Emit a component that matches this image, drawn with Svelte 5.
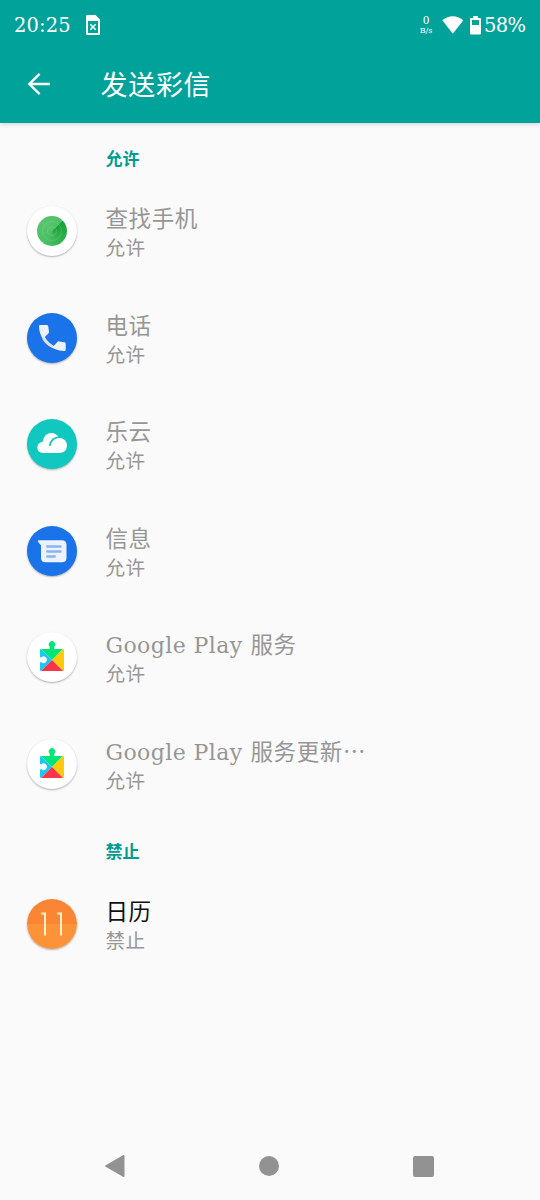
<script>
  const groups = [
    {
      title: '允许',
      apps: [
        { icon: 'radar', name: [['查找手机', 'zh']], state: '允许' },
        { icon: 'phone', name: [['电话', 'zh']], state: '允许' },
        { icon: 'cloud', name: [['乐云', 'zh']], state: '允许' },
        { icon: 'messages', name: [['信息', 'zh']], state: '允许' },
        { icon: 'play', name: [['Google Play', 'en'], ['服务', 'zh']], state: '允许' },
        { icon: 'play', name: [['Google Play', 'en'], ['服务更新…', 'zh']], state: '允许' }
      ]
    },
    {
      title: '禁止',
      apps: [{ icon: 'calendar', name: [['日历', 'zh']], state: '禁止', active: true }]
    }
  ];
</script>

<div class="screen" lang="zh-CN">
  <header>
    <div class="status">
      <span class="time">20:25</span>
      <svg class="sim" width="14" height="20" viewBox="0 0 14 20">
        <path fill="#fff" fill-rule="evenodd" d="M1.2 0H9.5L14 4.5V18.8Q14 20 12.8 20H1.2Q0 20 0 18.8V1.2Q0 0 1.2 0ZM2 6V18H12V6Z" />
        <path stroke="#fff" stroke-width="1.5" d="M4.3 9.2L9.7 14.8M9.7 9.2L4.3 14.8" />
      </svg>
      <span class="gap"></span>
      <span class="speed"><span>0</span><small>B/s</small></span>
      <svg class="wifi" width="22" height="18" viewBox="0 0 22 18">
        <path fill="#fff" d="M0.3 4.2Q10.8 -3.6 21.4 4.2L10.8 17.7Z" />
      </svg>
      <svg class="battery" width="11" height="19" viewBox="0 0 11 19">
        <path fill="#fff" fill-rule="evenodd" d="M3 0H8V2H10Q11 2 11 3V17.5Q11 18.5 10 18.5H1Q0 18.5 0 17.5V3Q0 2 1 2H3ZM2 4V9H9V4Z" />
      </svg>
      <span class="percent">58%</span>
    </div>
    <div class="toolbar">
      <svg width="24" height="24" viewBox="0 0 24 24" fill="none" stroke="#fff" stroke-width="2.4">
        <path d="M23 12H2.5M12.6 1.8L2.4 12L12.6 22.2" />
      </svg>
      <h1>发送彩信</h1>
    </div>
  </header>

  <main>
    {#each groups as group}
      <section>
        <h2>{group.title}</h2>
        {#each group.apps as app}
          <div class="row">
            <div class="icon {app.icon}">
              {#if app.icon === 'radar'}
                <div class="sweep">
                  <svg viewBox="0 0 30 30">
                    <g fill="none" stroke="#a5e8b0" stroke-width=".6" opacity=".4">
                      <circle cx="15" cy="15" r="4.5" /><circle cx="15" cy="15" r="9.5" />
                    </g>
                  </svg>
                </div>
              {:else if app.icon === 'phone'}
                <svg viewBox="0 0 50 50">
                  <path fill="#edf1fa" d="M13 12H19.7Q21 12 21.2 13.3L22 18.5Q22.2 19.7 21.4 20.5L17.7 24Q21 29.8 26.7 33L30.3 29.1Q31.1 28.2 32.3 28.4L37.6 29.3Q38.7 29.5 38.7 30.7V36.7Q38.7 38 37.4 38C24 38 12 26.5 12 13Q12 12 13 12Z" />
                  <path fill="#dcdfe6" d="M17.7 24Q21 29.8 26.7 33L24.4 34.5Q18 31.3 15.2 25.8Z" />
                </svg>
              {:else if app.icon === 'cloud'}
                <svg viewBox="0 0 50 50">
                  <path fill="#fff" d="M16.5 34Q10.3 33.7 10.3 28.5Q10.5 23.7 15.5 23Q17.2 14 24.5 14Q29 14 31.8 18.5Q40 20 40 26.8Q39.5 33.5 33 34Z" />
                  <path fill="none" stroke="#10c8bf" stroke-width="1.8" d="M22.8 26.8Q23.7 18.5 33.5 17.8" />
                </svg>
              {:else if app.icon === 'messages'}
                <svg viewBox="0 0 50 50">
                  <path fill="#edf3fd" d="M11.8 14.3H35Q39.5 14.3 39.5 18.8V31.7Q39.5 36.2 35 36.2H18.5Q14 36.2 14 31.7V19.5L11 15.8Q10.3 14.3 11.8 14.3Z" />
                  <path stroke="#8ab2f5" stroke-width="2.6" stroke-linecap="round" d="M20.3 20.5H33.4M20.3 25.5H33.4M20.3 30.5H27.7" />
                </svg>
              {:else if app.icon === 'play'}
                <svg viewBox="0 0 50 50">
                  <path fill="#00e676" d="M14 17H22.7V14.7A3.2 3.2 0 1 1 27.3 14.7V17H36L25 28Z" />
                  <path fill="#18c9f4" d="M14 17Q13 17 13 18V25.2H14.4A3.3 3.3 0 1 1 14.4 30.2H13V38Q13 39 14 39L25 28Z" />
                  <path fill="#ffca08" d="M36 17Q37 17 37 18V38Q37 39 36 39L25 28Z" />
                  <path fill="#fa3549" d="M14 39H36L25 28Z" />
                </svg>
              {:else}
                <svg viewBox="0 0 50 50">
                  <path fill="none" stroke="#fff0c8" stroke-width="2" d="M14 14.5H18V36.5M30 14.5H34V36.5" />
                </svg>
              {/if}
            </div>
            <div class="text">
              <div class="name" class:active={app.active}>
                {#each app.name as [part, kind]}<span class={kind}>{part}</span>{/each}
              </div>
              <div class="state">{app.state}</div>
            </div>
          </div>
        {/each}
      </section>
    {/each}
  </main>

  <nav>
    <svg width="20" height="24" viewBox="0 0 20 24"><path fill="#929292" stroke="#929292" stroke-width="2" stroke-linejoin="round" d="M1.2 12L18.5 2V22Z" /></svg>
    <svg width="20" height="20" viewBox="0 0 20 20"><circle cx="10" cy="10" r="10" fill="#929292" /></svg>
    <svg width="21" height="21" viewBox="0 0 21 21"><rect width="21" height="21" rx="2" fill="#929292" /></svg>
  </nav>
</div>

<style>
  :global(body) { margin: 0; background: #fafafa; }
  .screen {
    width: 540px;
    height: 1200px;
    display: flex;
    flex-direction: column;
    background: #fafafa;
    font-family: "DejaVu Serif", "Noto Sans CJK SC", serif;
    overflow: hidden;
  }
  svg { display: block; flex: none; }
  header {
    height: 123px;
    flex: none;
    background: #00a29a;
    color: #fff;
    box-shadow: 0 1px 5px rgba(0, 0, 0, .18);
  }
  .status {
    height: 50px;
    display: flex;
    align-items: center;
    padding: 0 14px;
    box-sizing: border-box;
  }
  .time { width: 58px; font-size: 19.5px; white-space: nowrap; letter-spacing: .1px; }
  .sim { margin-left: 14px; }
  .gap { flex: 1; }
  .speed {
    width: 14px;
    margin-right: 9px;
    display: flex;
    flex-direction: column;
    align-items: center;
    font-size: 10.5px;
    line-height: 11px;
  }
  .speed small { font-size: 8px; line-height: 9px; }
  .wifi { margin-right: 6px; }
  .battery { margin-right: 3px; }
  .percent { width: 42px; font-size: 19.5px; letter-spacing: -.6px; white-space: nowrap; }
  .toolbar { height: 68px; display: flex; align-items: center; padding-left: 27px; gap: 49.5px; }
  h1 { margin: 0; font-family: "Noto Sans CJK SC", sans-serif; font-size: 27px; line-height: 40px; font-weight: 400; letter-spacing: .7px; }
  main { flex: 1; }
  h2 {
    height: 54.5px;
    box-sizing: border-box;
    margin: 0;
    padding: 23px 0 0 105.5px;
    color: #009c94;
    font-family: "Noto Sans CJK SC", sans-serif;
    font-size: 17px;
    line-height: 24px;
    font-weight: 700;
  }
  section + section h2 { height: 53.5px; padding-top: 22px; }
  .row { height: 106.5px; display: flex; align-items: flex-start; padding-left: 27px; box-sizing: border-box; }
  .icon {
    width: 50px;
    height: 50px;
    margin: 28.5px 28.5px 0 0;
    border-radius: 50%;
    background: #fff;
    box-shadow: 0 1px 2px rgba(0, 0, 0, .3);
  }
  .radar { display: grid; place-items: center; }
  .sweep {
    width: 30px;
    height: 30px;
    border-radius: 50%;
    background: conic-gradient(from 46deg, #16a238, #2fb04e 22%, #4abf64 45%, #58c570 75%, #4cc066);
  }
  .phone, .messages { background: #1a73e8; }
  .cloud { background: #10c8bf; }
  .calendar { background: linear-gradient(#fa8535 50%, #fc9339 50%); }
  .text { padding-top: 24.5px; }
  .name { height: 31px; display: flex; align-items: baseline; gap: 8px; color: #969696; line-height: 30px; white-space: nowrap; }
  .name.active { color: #111; }
  .zh { font-size: 22.5px; letter-spacing: .6px; font-family: "Noto Sans CJK SC", sans-serif; }
  .en { font-size: 22px; letter-spacing: .4px; }
  .state { height: 28px; color: #969696; font-family: "Noto Sans CJK SC", sans-serif; font-size: 19.5px; line-height: 28px; letter-spacing: .4px; }
  nav { height: 68px; flex: none; display: flex; align-items: center; justify-content: space-between; padding: 0 106px 0 105px; }
</style>
